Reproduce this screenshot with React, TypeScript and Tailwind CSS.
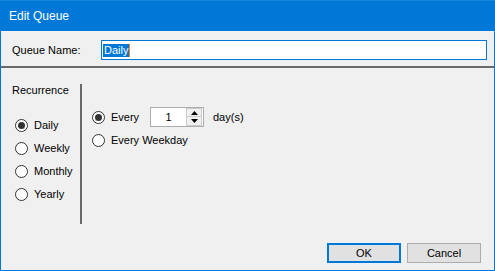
import React, { useState } from 'react';

const font = { fontFamily: '"Liberation Sans", Arial, sans-serif' };

const Radio: React.FC<{ checked: boolean; label: string; onClick: () => void }> = ({ checked, label, onClick }) => (
  <button onClick={onClick} className="flex items-center gap-[6px] text-[11px] text-black leading-none cursor-default">
    <span className="w-[13px] h-[13px] rounded-full border border-[#333333] bg-white flex items-center justify-center shrink-0">
      {checked && <span className="w-[7px] h-[7px] rounded-full bg-[#333333]" />}
    </span>
    <span>{label}</span>
  </button>
);

export default function App() {
  const [kind, setKind] = useState('Daily');
  const [mode, setMode] = useState<'every' | 'weekday'>('every');
  const [days, setDays] = useState(1);

  return (
    <div style={font} className="w-[495px] h-[271px] flex flex-col bg-[#f0f0f0] border-x border-b border-[#0078d7] select-none">
      {/* title bar */}
      <div className="h-[31px] -mx-px bg-[#0078d7] border-t border-[#1a84da] flex items-center pl-[9px] shrink-0">
        <span className="text-white text-[12px]">Edit Queue</span>
      </div>

      {/* queue name row */}
      <div className="flex items-center mt-[9px] h-[20px]">
        <span className="w-[100px] pl-[11px] text-[11px] text-black">Queue Name:</span>
        <div className="w-[386px] h-[20px] bg-white border border-[#0078d7] flex items-center pl-[1px]">
          <span className="bg-[#0078d7] text-white text-[11px] leading-[13px] px-[1px]">Daily</span>
          <span className="w-px h-[13px] bg-[#ff8000]" />
        </div>
      </div>

      <div className="mt-[6px] h-[2px] bg-[#696969]" />

      <div className="flex mt-[16px]">
        {/* left column */}
        <div className="w-[79px] flex flex-col">
          <span className="pl-[11px] text-[11px] leading-[13px] text-black">Recurrence</span>
          <div className="mt-[17px] flex flex-col pl-[14px]">
            {['Daily', 'Weekly', 'Monthly', 'Yearly'].map(k => (
              <div key={k} className="h-[23px] flex items-center">
                <Radio checked={kind === k} label={k} onClick={() => setKind(k)} />
              </div>
            ))}
          </div>
        </div>

        <div className="w-[2px] h-[140px] bg-[#696969]" />

        {/* right column */}
        <div className="flex flex-col pl-[10px] pt-[23px]">
          <div className="h-[20px] flex items-center">
            <div className="w-[58px]">
              <Radio checked={mode === 'every'} label="Every" onClick={() => setMode('every')} />
            </div>
            <div className="w-[54px] h-[20px] border border-[#adadad] bg-white flex items-center">
              <span className="flex-1 text-center text-[11px] text-black">{days}</span>
              <div className="w-[16px] h-[18px] flex flex-col mr-px">
                <button
                  onClick={() => setDays(days + 1)}
                  className="h-[9px] border border-[#cccccc] bg-[#f0f0f0] flex items-center justify-center"
                >
                  <svg width="7" height="4" viewBox="0 0 7 4"><path d="M0 4 L3.5 0 L7 4 Z" fill="#000" /></svg>
                </button>
                <button
                  onClick={() => setDays(Math.max(1, days - 1))}
                  className="h-[9px] border border-t-0 border-[#cccccc] bg-[#f0f0f0] flex items-center justify-center"
                >
                  <svg width="7" height="4" viewBox="0 0 7 4"><path d="M0 0 L3.5 4 L7 0 Z" fill="#000" /></svg>
                </button>
              </div>
            </div>
            <span className="ml-[9px] text-[11px] text-black">day(s)</span>
          </div>
          <div className="h-[23px] flex items-center mt-[2px]">
            <Radio checked={mode === 'weekday'} label="Every Weekday" onClick={() => setMode('weekday')} />
          </div>
        </div>
      </div>

      {/* buttons */}
      <div className="mt-auto mb-[7px] flex justify-end gap-[6px] pr-[13px]">
        <button className="w-[74px] h-[20px] border-2 border-[#0078d7] bg-[#e1e1e1] text-[11px] text-black">OK</button>
        <button className="w-[74px] h-[20px] border border-[#adadad] bg-[#e1e1e1] text-[11px] text-black">Cancel</button>
      </div>
    </div>
  );
}
